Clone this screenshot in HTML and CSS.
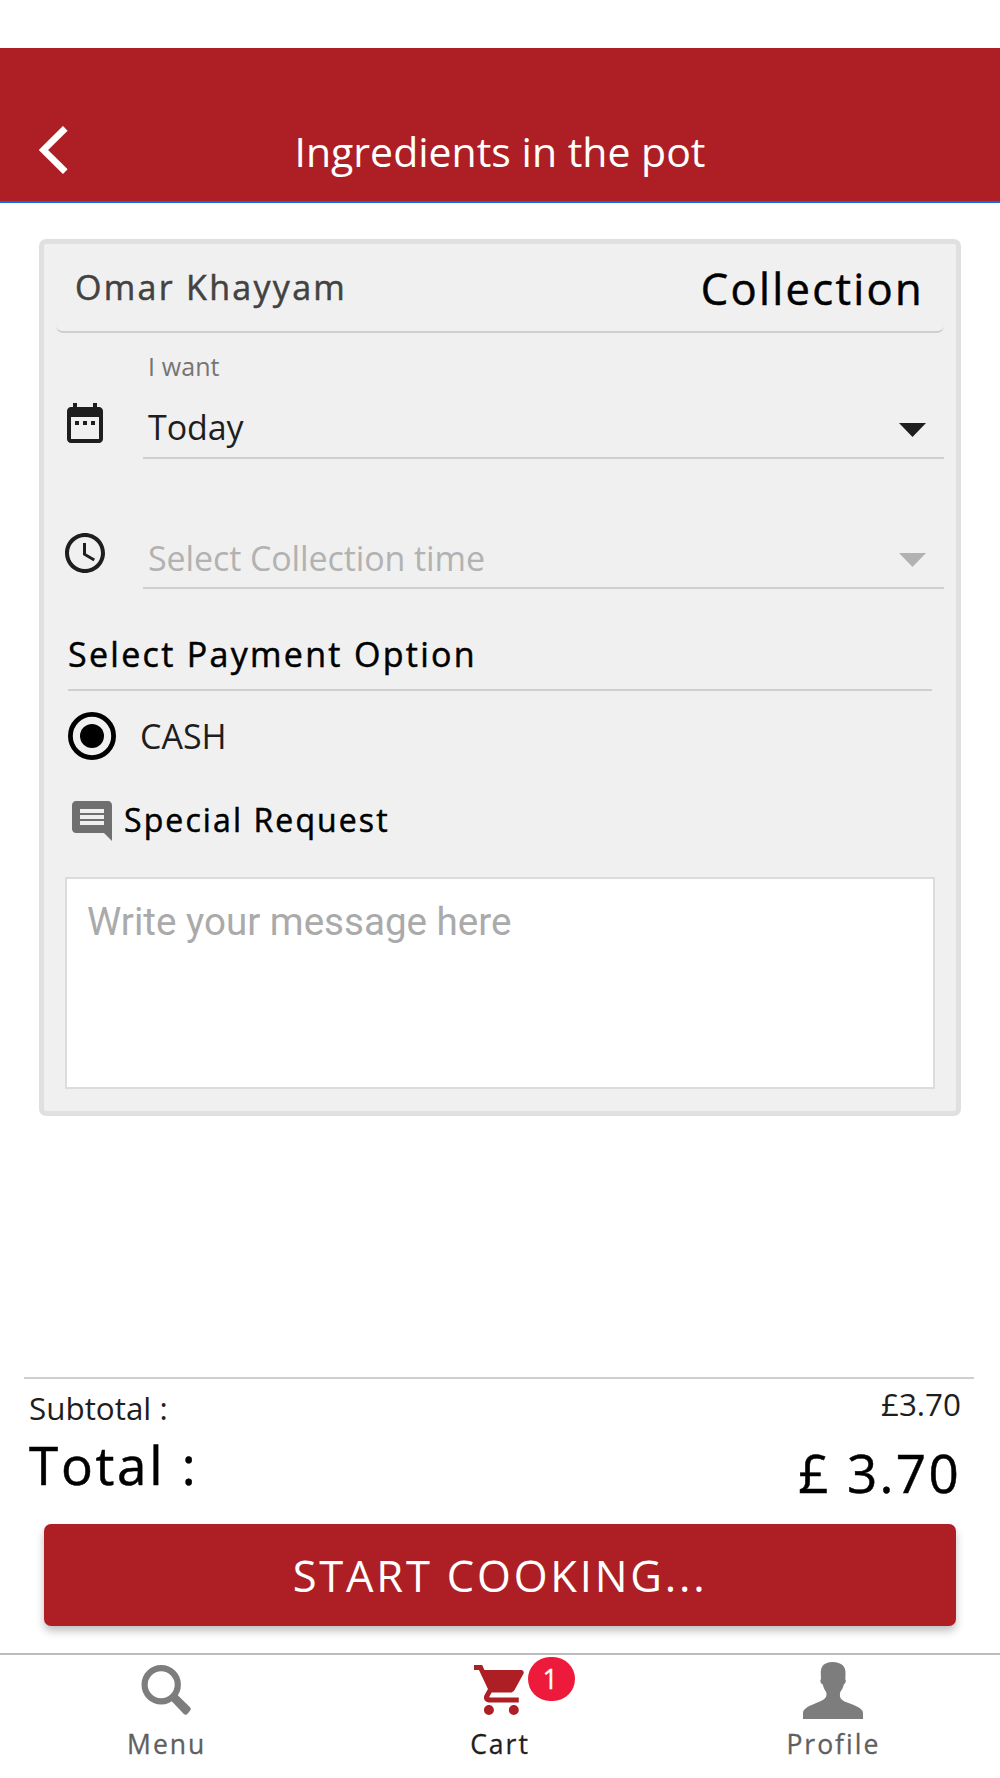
FILE: index.html
```html
<!DOCTYPE html>
<html lang="en">
<head>
  <meta charset="UTF-8" />
  <meta name="viewport" content="width=device-width, initial-scale=1.0"/>
  <title>Ingredients in the pot</title>
  <link rel="stylesheet" href="styles.css">
</head>
<body>
  <header class="header">
    <svg class="back" viewBox="0 0 29 48"><path d="M26.3 2.3 4.5 24l21.8 21.7" fill="none" stroke="#fff" stroke-width="6.6"/></svg>
    <h1>Ingredients in the pot</h1>
  </header>

  <main class="card">
    <div class="card-head">
      <span class="name">Omar Khayyam</span>
      <span class="type">Collection</span>
    </div>

    <div class="field">
      <svg class="field-icon" viewBox="0 0 24 24"><path d="M9 11H7v2h2v-2zm4 0h-2v2h2v-2zm4 0h-2v2h2v-2zm2-7h-1V2h-2v2H8V2H6v2H5c-1.11 0-1.99.9-1.99 2L3 20c0 1.1.89 2 2 2h14c1.1 0 2-.9 2-2V6c0-1.1-.9-2-2-2zm0 16H5V9h14v11z"/></svg>
      <div class="field-body">
        <label class="field-label">I want</label>
        <div class="select">
          <span>Today</span>
          <svg class="arrow" viewBox="0 0 27 14"><path d="M0 0h27L13.5 14z"/></svg>
        </div>
      </div>
    </div>

    <div class="field second">
      <svg class="field-icon" viewBox="0 0 24 24"><path d="M11.99 2C6.47 2 2 6.48 2 12s4.47 10 9.99 10C17.52 22 22 17.52 22 12S17.52 2 11.99 2zM12 20c-4.42 0-8-3.58-8-8s3.58-8 8-8 8 3.58 8 8-3.58 8-8 8zm.5-13H11v6l5.25 3.15.75-1.23-4.5-2.67z"/></svg>
      <div class="field-body">
        <div class="select empty">
          <span>Select Collection time</span>
          <svg class="arrow" viewBox="0 0 27 14"><path d="M0 0h27L13.5 14z"/></svg>
        </div>
      </div>
    </div>

    <section class="payment">
      <h2>Select Payment Option</h2>
      <div class="option">
        <svg class="radio" viewBox="0 0 48 48"><circle cx="24" cy="24" r="21.6" fill="none" stroke="#000" stroke-width="4.8"/><circle cx="24" cy="24" r="12"/></svg>
        <span>CASH</span>
      </div>
    </section>

    <div class="request">
      <svg class="comment" viewBox="2 2 20 20"><path d="M21.99 4c0-1.1-.89-2-1.99-2H4c-1.1 0-2 .9-2 2v12c0 1.1.9 2 2 2h14l4 4-.01-18zM18 14H6v-2h12v2zm0-3H6V9h12v2zm0-3H6V6h12v2z"/></svg>
      <h3>Special Request</h3>
    </div>
    <textarea class="message" placeholder="Write your message here"></textarea>
  </main>

  <footer class="footer">
    <div class="totals">
      <div class="labels">
        <span class="small">Subtotal :</span>
        <span class="big">Total :</span>
      </div>
      <div class="amounts">
        <span class="small">£3.70</span>
        <span class="big">£ 3.70</span>
      </div>
    </div>
    <button class="start">START COOKING...</button>
  </footer>

  <nav class="nav">
    <a class="tab">
      <svg class="tab-icon" viewBox="0 0 50 50" fill="#7d7d7d"><circle cx="19.7" cy="19.7" r="16.6" fill="none" stroke="#7d7d7d" stroke-width="6.2"/><path d="M29.5 35.5l6-6 12.8 12.6q2 2 0 4l-2.2 2.6q-2 2-4 0z"/></svg>
      <span>Menu</span>
    </a>
    <a class="tab active">
      <svg class="tab-icon" viewBox="1 2 20.5 20" fill="#ad1f25"><path d="M7 18c-1.1 0-1.99.9-1.99 2S5.9 22 7 22s2-.9 2-2-.9-2-2-2zM1 2v2h2l3.6 7.59-1.35 2.45c-.16.28-.25.61-.25.96 0 1.1.9 2 2 2h12v-2H7.42c-.14 0-.25-.11-.25-.25l.03-.12.9-1.63h7.45c.75 0 1.41-.41 1.75-1.03l3.58-6.49c.08-.14.12-.31.12-.48 0-.55-.45-1-1-1H5.21l-.94-2H1zm16 16c-1.1 0-1.99.9-1.99 2s.89 2 1.99 2 2-.9 2-2-.9-2-2-2z"/></svg>
      <span>Cart</span>
      <b class="badge">1</b>
    </a>
    <a class="tab">
      <svg class="tab-icon user" viewBox="0 0 60 57" fill="#7d7d7d"><path d="M29.5 0C39 0 43 5 42.5 11.5L42.3 17c1 1 .6 4.5-1.5 5.5C40 26.5 38.5 28 37.3 30c-1.3 6 .7 8 6.2 10.3C53 44 60 46.5 60 51v6H0v-6c0-4.5 7-7.5 15-10.7 7-2.8 9.5-5 8.2-10.3-1.5-2-2.7-4.5-3.4-7.5-2.6-1-3-4.5-1.8-5.5l-.2-5.5C17.5 5 20.5 0 29.5 0z"/></svg>
      <span>Profile</span>
    </a>
  </nav>
</body>
</html>
```
FILE: styles.css
```css
* {
  box-sizing: border-box;
}

body {
  margin: 0;
  height: 1778px;
  padding-top: 48px;
  display: flex;
  flex-direction: column;
  font-family: "Open Sans", sans-serif;
  background: #fff;
  color: #1e1e1e;
}

h1, h2, h3 {
  margin: 0;
  font-weight: 400;
}

svg {
  display: block;
  flex: none;
}

.header {
  height: 155px;
  padding: 52px 39px 0;
  display: grid;
  grid-template-columns: 29px 1fr 29px;
  align-items: center;
  background: #ad1f25;
  border-bottom: 2px solid #1668ec;
  color: #fff;
}

.header h1 {
  font-size: 41px;
  line-height: 60px;
  text-align: center;
}

.back {
  width: 29px;
  height: 48px;
  margin-bottom: 2px;
}

.card {
  margin: 36px 39px 0;
  height: 877px;
  border: 5px solid #e0e0e0;
  border-radius: 7px;
  background: #f0f0f0;
}

.card-head {
  height: 89px;
  margin: 0 12px;
  padding: 0 20px 0 19px;
  display: flex;
  justify-content: space-between;
  align-items: center;
  border-bottom: 2px solid #cfcfcf;
  border-radius: 7px;
}

/* slightly heavier than regular, Open Sans has no medium here */
.name, .type, .payment h2, .request h3, .big {
  -webkit-text-stroke: 0.5px;
}

.name {
  padding-bottom: 2px;
  font-size: 34px;
  letter-spacing: 2.3px;
  color: #424242;
}

.type {
  padding-top: 1px;
  font-size: 43.5px;
  letter-spacing: 2.3px;
  color: #000;
}

.field {
  height: 126px;
  padding: 0 12px 0 17px;
  display: flex;
  align-items: flex-end;
  gap: 34px;
}

.field.second {
  height: 130px;
}

.field-icon {
  width: 48px;
  height: 48px;
  margin-bottom: 12px;
  fill: #1e1e1e;
}

.field-body {
  flex: 1;
}

.field-label {
  display: block;
  padding-left: 5px;
  margin-bottom: 13px;
  font-size: 25px;
  line-height: 34px;
  letter-spacing: 0.1px;
  color: #757575;
}

.select {
  height: 63px;
  padding: 0 18px 0 5px;
  display: flex;
  justify-content: space-between;
  align-items: center;
  border-bottom: 2px solid #cfcfcf;
  font-size: 34px;
  letter-spacing: -0.1px;
}

.arrow {
  width: 27px;
  height: 14px;
  margin-top: 6px;
  fill: #1e1e1e;
}

.empty {
  padding-top: 2px;
  color: #b2b2b2;
}

.empty .arrow {
  margin-top: 4px;
  fill: #b2b2b2;
}

.payment {
  margin: 28px 24px 0;
}

.payment h2 {
  padding-top: 2px;
  border-bottom: 2px solid #cfcfcf;
  font-size: 34px;
  line-height: 70px;
  letter-spacing: 2.3px;
  color: #000;
}

.option {
  height: 90px;
  display: flex;
  align-items: center;
  gap: 24px;
  font-size: 34px;
}

.radio {
  width: 48px;
  height: 48px;
}

.request {
  height: 80px;
  padding-left: 28px;
  display: flex;
  align-items: center;
  gap: 12px;
}

.comment {
  width: 40px;
  height: 40px;
  fill: #6f6f6f;
}

.request h3 {
  padding-bottom: 4px;
  font-size: 32px;
  letter-spacing: 2.1px;
  color: #000;
}

.message {
  display: block;
  width: 870px;
  height: 212px;
  margin: 16px 0 0 21px;
  padding: 20px;
  border: 2px solid #dcdcdc;
  background: #fff;
  font-family: Roboto, sans-serif;
  font-size: 38.6px;
  line-height: 46px;
  resize: none;
}

.message::placeholder {
  color: #aaa;
}

.footer {
  margin-top: auto;
  height: 276px;
}

.totals {
  height: 147px;
  margin: 0 26px 0 24px;
  padding: 0 13px 0 5px;
  display: flex;
  justify-content: space-between;
  border-top: 2px solid #cfcfcf;
}

.labels, .amounts {
  display: flex;
  flex-direction: column;
}

.labels {
  padding-top: 9px;
}

.amounts {
  padding-top: 5px;
  align-items: flex-end;
}

.small {
  font-size: 31.4px;
  line-height: 40px;
}

.big {
  font-size: 53px;
  line-height: 74px;
  letter-spacing: 2.7px;
  color: #000;
}

.amounts .big {
  margin-top: 12px;
  letter-spacing: 2.3px;
}

.start {
  display: block;
  width: 912px;
  height: 102px;
  margin: 0 auto;
  border: none;
  border-radius: 7px;
  background: #ad1f25;
  box-shadow: 0 5px 9px rgba(0,0,0,0.25);
  color: #fff;
  font-family: "Open Sans", sans-serif;
  font-size: 43.5px;
  letter-spacing: 2.8px;
}

.nav {
  height: 125px;
  display: grid;
  grid-template-columns: repeat(3, 1fr);
  border-top: 2px solid #bcbcbc;
}

.tab {
  position: relative;
  display: flex;
  flex-direction: column;
  align-items: center;
  color: #5f5f5f;
  font-size: 26.5px;
  line-height: 38px;
  letter-spacing: 2px;
  -webkit-text-stroke: 0.3px;
}

.tab.active {
  color: #1e1e1e;
}

.tab-icon {
  width: 51px;
  height: 50px;
  margin: 10px 0;
}

.tab-icon.user {
  width: 60px;
  height: 57px;
  margin: 7px 0 6px;
}

/* item counter over the cart icon */
.badge {
  position: absolute;
  left: 195px;
  top: 2px;
  width: 47px;
  height: 44px;
  border-radius: 22px;
  background: #ed1a3b;
  color: #fff;
  font-size: 27px;
  font-weight: 400;
  line-height: 44px;
  letter-spacing: 0;
  text-align: center;
  text-indent: -3px;
}
```
